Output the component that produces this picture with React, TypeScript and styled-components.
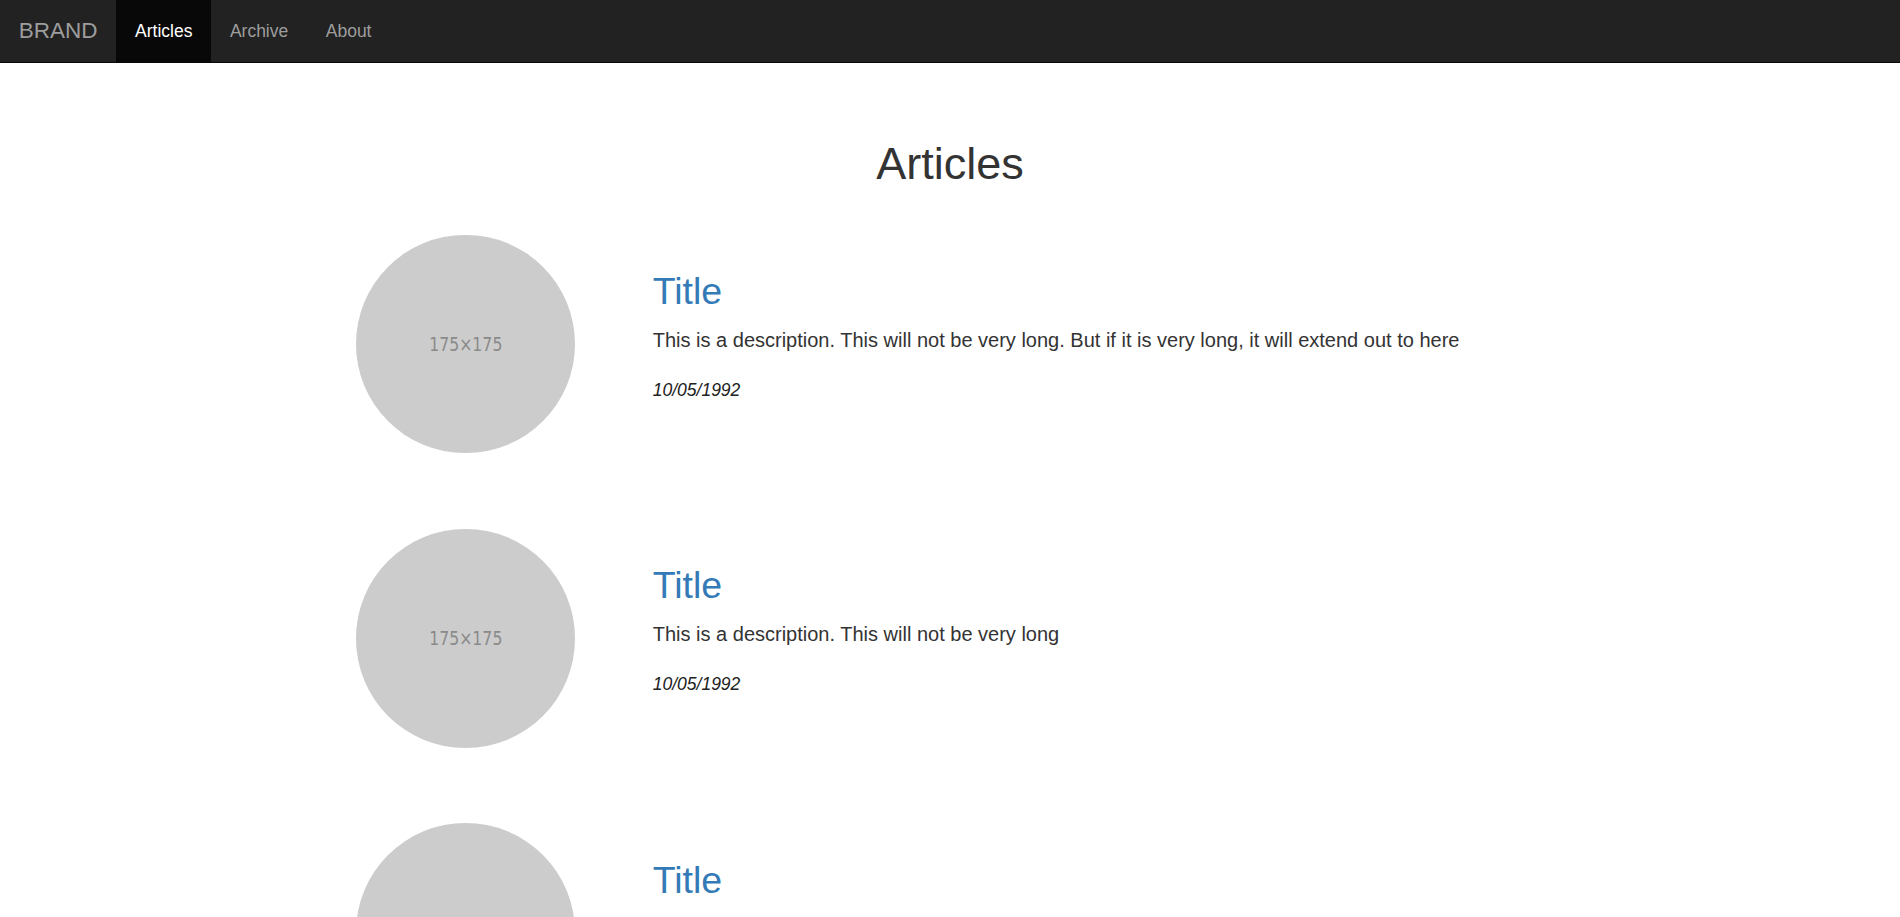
import React from "react";
import styled, { createGlobalStyle } from "styled-components";

const GlobalStyle = createGlobalStyle`
  html, body {
    margin: 0;
    padding: 0;
    background: #fff;
  }
  body {
    font-family: "Liberation Sans", Arial, Helvetica, sans-serif;
    color: #333;
  }
  * { box-sizing: border-box; }
`;

const Navbar = styled.nav`
  display: flex;
  align-items: stretch;
  height: 63px;
  background: #222;
  border-bottom: 1px solid #080808;
`;

const Brand = styled.a`
  display: block;
  padding: 0 18.75px;
  font-size: 22.5px;
  line-height: 62px;
  color: #9d9d9d;
  text-decoration: none;
`;

const NavList = styled.ul`
  display: flex;
  margin: 0;
  padding: 0;
  list-style: none;
`;

const NavLink = styled.a<{ $active?: boolean }>`
  display: block;
  padding: 0 18.75px;
  font-size: 17.5px;
  line-height: 62px;
  text-decoration: none;
  color: ${(p) => (p.$active ? "#fff" : "#9d9d9d")};
  background: ${(p) => (p.$active ? "#080808" : "transparent")};
`;

const Main = styled.main`
  width: 1188px;
  margin: 0 auto;
  padding-bottom: 60px;
`;

const PageTitle = styled.h1`
  margin: 75.5px 0 0;
  text-align: center;
  font-size: 45px;
  line-height: 1.1;
  font-weight: 500;
  color: #333;
`;

const ArticleList = styled.div`
  display: flex;
  flex-direction: column;
  gap: 75.6px;
  margin-top: 46.5px;
`;

const ArticleRow = styled.article`
  display: flex;
  align-items: flex-start;
  gap: 78px;
`;

const Thumb = styled.div`
  flex: 0 0 218.75px;
  width: 218.75px;
  height: 218.75px;
  border-radius: 50%;
  background: #ccc;
  display: flex;
  align-items: center;
  justify-content: center;
`;

const ThumbLabel = styled.span`
  display: inline-block;
  font-family: "DejaVu Sans Condensed", "DejaVu Sans", sans-serif;
  font-stretch: condensed;
  font-size: 19px;
  color: #8a8a8a;
  transform: scaleX(0.92);
`;

const Body = styled.div`
  padding-top: 36.4px;
`;

const Title = styled.h2`
  margin: 0;
  font-size: 37.5px;
  line-height: 1.1;
  font-weight: 500;
  color: #337ab7;
`;

const Description = styled.h4`
  margin: 16.7px 0 0;
  font-size: 20px;
  line-height: 1.1;
  font-weight: 500;
  color: #333;
`;

const DateLine = styled.p`
  margin: 27px 0 0;
  font-size: 17.5px;
  line-height: 25px;
  font-style: italic;
  color: #222;
`;

const articles = [
  {
    title: "Title",
    desc: "This is a description. This will not be very long. But if it is very long, it will extend out to here",
    date: "10/05/1992",
  },
  {
    title: "Title",
    desc: "This is a description. This will not be very long",
    date: "10/05/1992",
  },
  {
    title: "Title",
    desc: "This is a description. This will not be very long",
    date: "10/05/1992",
  },
];

export default function App() {
  return (
    <>
      <GlobalStyle />
      <Navbar>
        <Brand href="#">BRAND</Brand>
        <NavList>
          <li>
            <NavLink href="#" $active>
              Articles
            </NavLink>
          </li>
          <li>
            <NavLink href="#">Archive</NavLink>
          </li>
          <li>
            <NavLink href="#">About</NavLink>
          </li>
        </NavList>
      </Navbar>
      <Main>
        <PageTitle>Articles</PageTitle>
        <ArticleList>
          {articles.map((a, i) => (
            <ArticleRow key={i}>
              <Thumb>
                <ThumbLabel>175×175</ThumbLabel>
              </Thumb>
              <Body>
                <Title>{a.title}</Title>
                <Description>{a.desc}</Description>
                <DateLine>{a.date}</DateLine>
              </Body>
            </ArticleRow>
          ))}
        </ArticleList>
      </Main>
    </>
  );
}
